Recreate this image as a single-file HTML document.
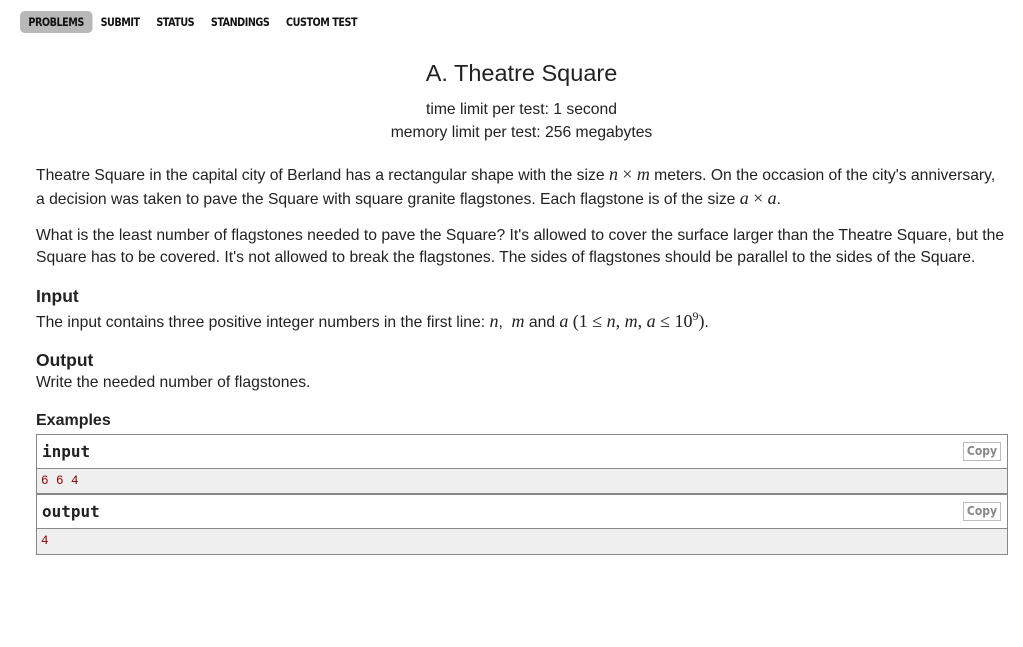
<!DOCTYPE html>
<html><head><meta charset="utf-8"><style>
body{margin:0;background:#fff;font-family:"Liberation Sans",Arial,sans-serif;color:#222;width:1023px;height:647px;overflow:hidden;position:relative}
.nav{position:absolute;top:11px;left:20px;display:flex;font-family:"DejaVu Sans Condensed","Liberation Sans Narrow","Liberation Sans",sans-serif;font-weight:bold;font-size:11.5px;letter-spacing:-0.5px;transform:scaleX(0.93);transform-origin:0 0}
.nav span{padding:4px 9px 4px 9px;line-height:14px;color:#111}
.nav span.a{background:#b8b8b8;border-radius:5px}
.t{position:absolute;left:0;width:1043px;text-align:center}
.p{position:absolute;left:36px;width:968px;font-size:15.7px;line-height:24px;color:#222}
.m{font-family:"Liberation Serif",serif;font-style:italic;font-size:18px;line-height:10px}
.r{font-family:"Liberation Serif",serif;font-size:18px;line-height:10px}
h3{position:absolute;left:36px;margin:0;font-size:17.5px;font-weight:bold;color:#222}
.box{position:absolute;left:36px;width:970px;border:1px solid #888}
.hd{height:33px;background:#fff;border-bottom:1px solid #888;position:relative;font-family:"DejaVu Sans Mono","Liberation Mono",monospace;font-weight:bold;font-size:16px;line-height:33px;padding-left:5px}
.dt{height:25px;background:#efefef;font-family:"Liberation Mono",monospace;font-size:12.5px;color:#8b0000;line-height:25px;padding-left:4px}
.cp{position:absolute;right:6px;top:7px;border:1px solid #bbb;font-family:"DejaVu Sans Condensed","Liberation Sans",sans-serif;font-weight:bold;font-size:12px;color:#888;line-height:15px;padding:1px 3px}
</style></head><body>
<div class="nav"><span class="a">PROBLEMS</span><span>SUBMIT</span><span>STATUS</span><span>STANDINGS</span><span>CUSTOM TEST</span></div>
<div class="t" style="top:60px;font-size:23.5px;color:#222">A. Theatre Square</div>
<div class="t" style="top:101px;font-size:15.7px">time limit per test: 1 second</div>
<div class="t" style="top:124px;font-size:15.7px">memory limit per test: 256 megabytes</div>
<div class="p" style="top:164px">Theatre Square in the capital city of Berland has a rectangular shape with the size <span class="m">n</span> <span class="r">×</span> <span class="m">m</span> meters. On the occasion of the city's anniversary, a decision was taken to pave the Square with square granite flagstones. Each flagstone is of the size <span class="m">a</span> <span class="r">×</span> <span class="m">a</span>.</div>
<div class="p" style="top:225px;line-height:22px;width:980px">What is the least number of flagstones needed to pave the Square? It's allowed to cover the surface larger than the Theatre Square, but the Square has to be covered. It's not allowed to break the flagstones. The sides of flagstones should be parallel to the sides of the Square.</div>
<h3 style="top:286px">Input</h3>
<div class="p" style="top:311px">The input contains three positive integer numbers in the first line: <span class="m">n</span>, &nbsp;<span class="m">m</span> and <span class="m">a</span> <span class="r">(1 ≤ <i>n</i>, <i>m</i>, <i>a</i> ≤ 10<sup style="font-size:12px;line-height:0">9</sup>)</span>.</div>
<h3 style="top:350px">Output</h3>
<div class="p" style="top:371px">Write the needed number of flagstones.</div>
<h3 style="top:412px;font-size:16px">Examples</h3>
<div class="box" style="top:434px">
<div class="hd">input<span class="cp">Copy</span></div>
<div class="dt">6 6 4</div>
</div>
<div class="box" style="top:493px;border-top:2px solid #888">
<div class="hd">output<span class="cp">Copy</span></div>
<div class="dt">4</div>
</div>
</body></html>
